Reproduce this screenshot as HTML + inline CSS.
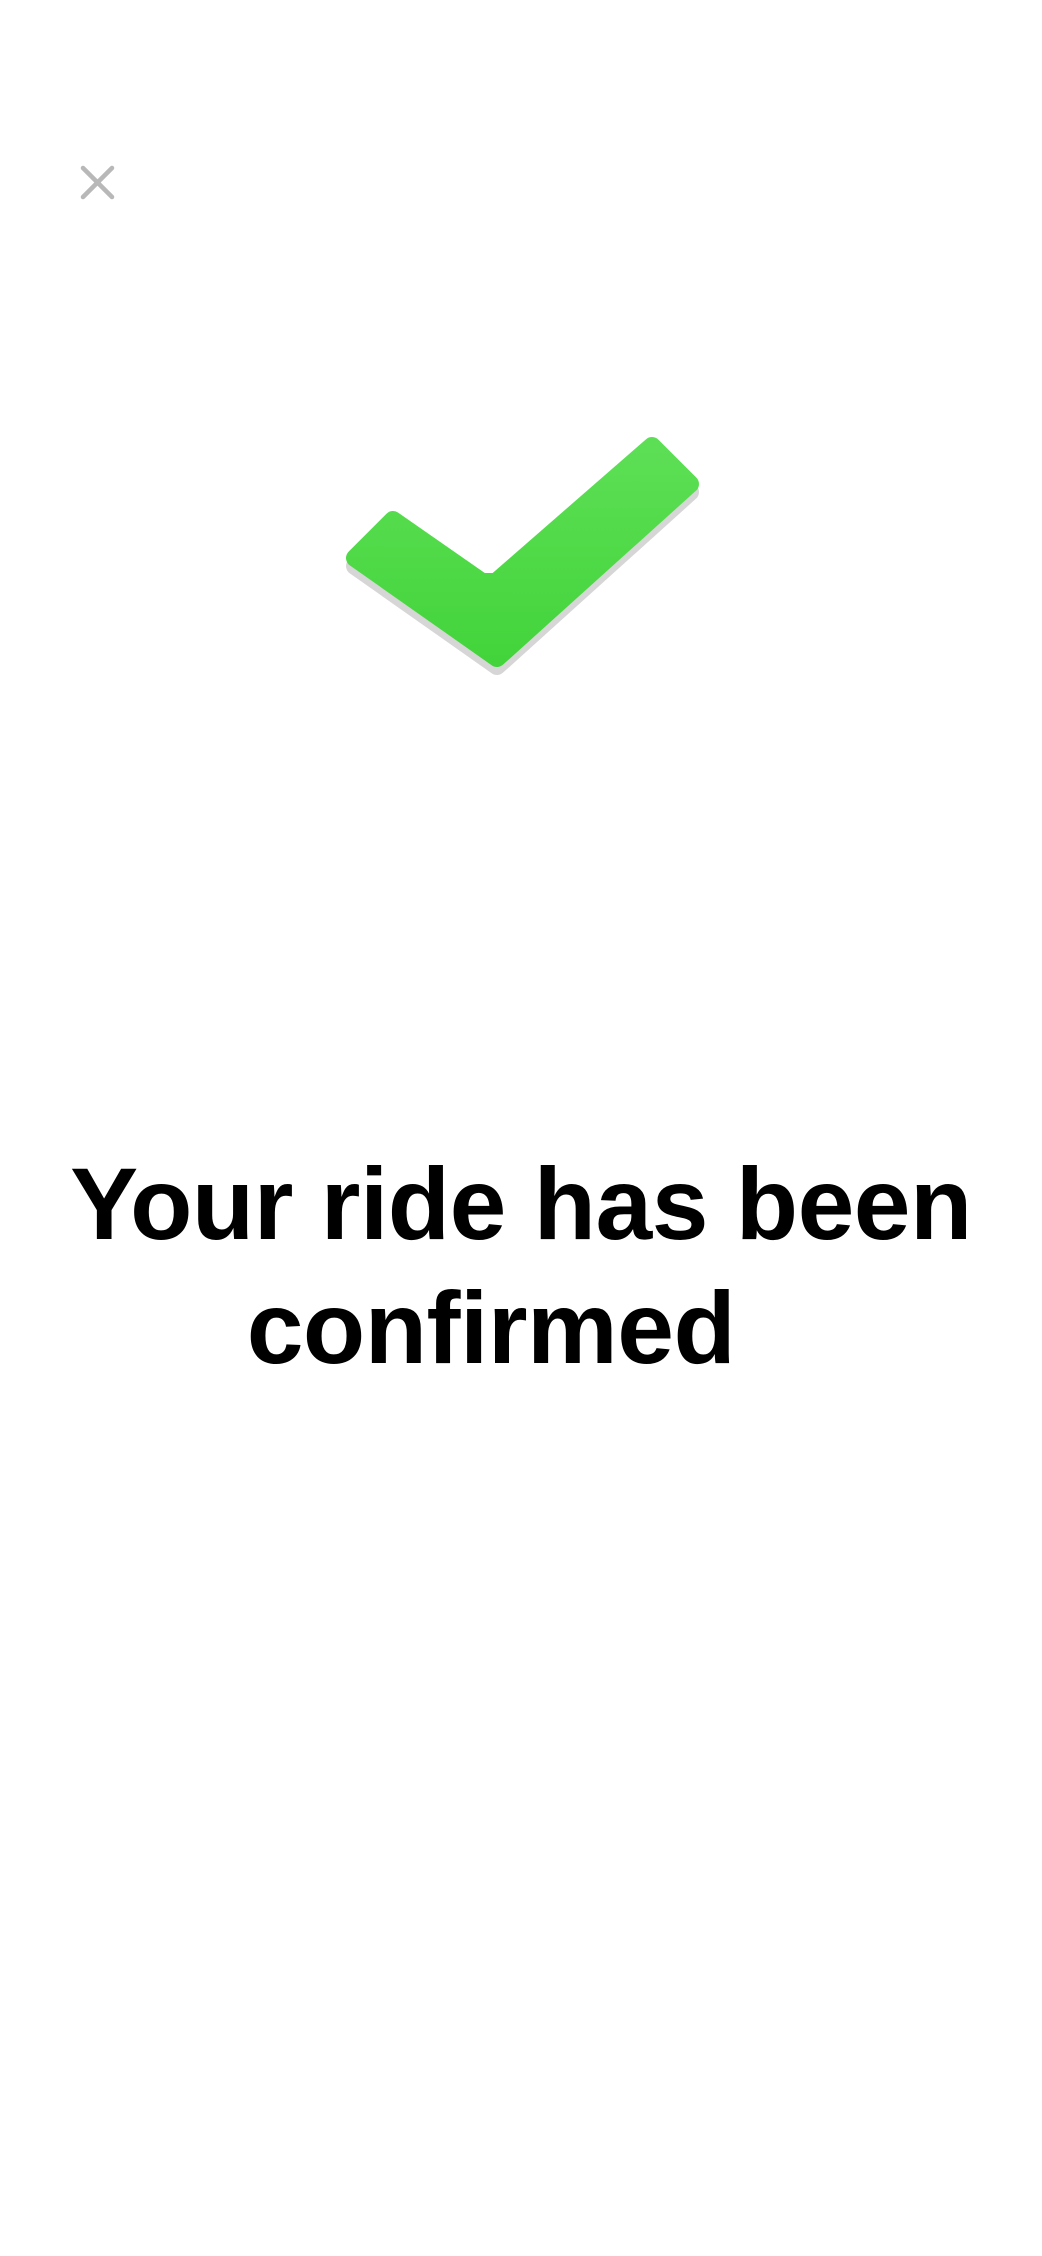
<!DOCTYPE html>
<html><head><meta charset="utf-8"><style>
html,body{margin:0;padding:0;background:#fff;width:1042px;height:2256px;overflow:hidden}
.t{position:absolute;left:0;width:1042px;text-align:center;font-family:"Liberation Sans",Arial,sans-serif;font-weight:bold;font-size:102px;letter-spacing:-0.5px;color:#000;line-height:121px}
</style></head><body>
<svg width="1042" height="2256" style="position:absolute;left:0;top:0">
<g stroke="#b8b8b8" stroke-width="4.5" stroke-linecap="round"><line x1="83" y1="168" x2="112" y2="197"/><line x1="112" y1="168" x2="83" y2="197"/></g>
<defs><linearGradient id="g" x1="0" y1="0" x2="0" y2="1"><stop offset="0" stop-color="#5ddf55"/><stop offset="1" stop-color="#43d43b"/></linearGradient></defs>
<polygon points="355,566 393,528 482,590 496,590 652,454 690,492 497,666" fill="#d6d6d6" stroke="#d6d6d6" stroke-width="18" stroke-linejoin="round"/>
<polygon points="355,558 393,520 482,582 496,582 652,446 690,484 497,658" fill="url(#g)" stroke="url(#g)" stroke-width="18" stroke-linejoin="round"/>
</svg>
<div class="t" style="top:1144px">Your ride has been</div>
<div class="t" style="top:1268px;left:-30px">confirmed</div>
</body></html>
